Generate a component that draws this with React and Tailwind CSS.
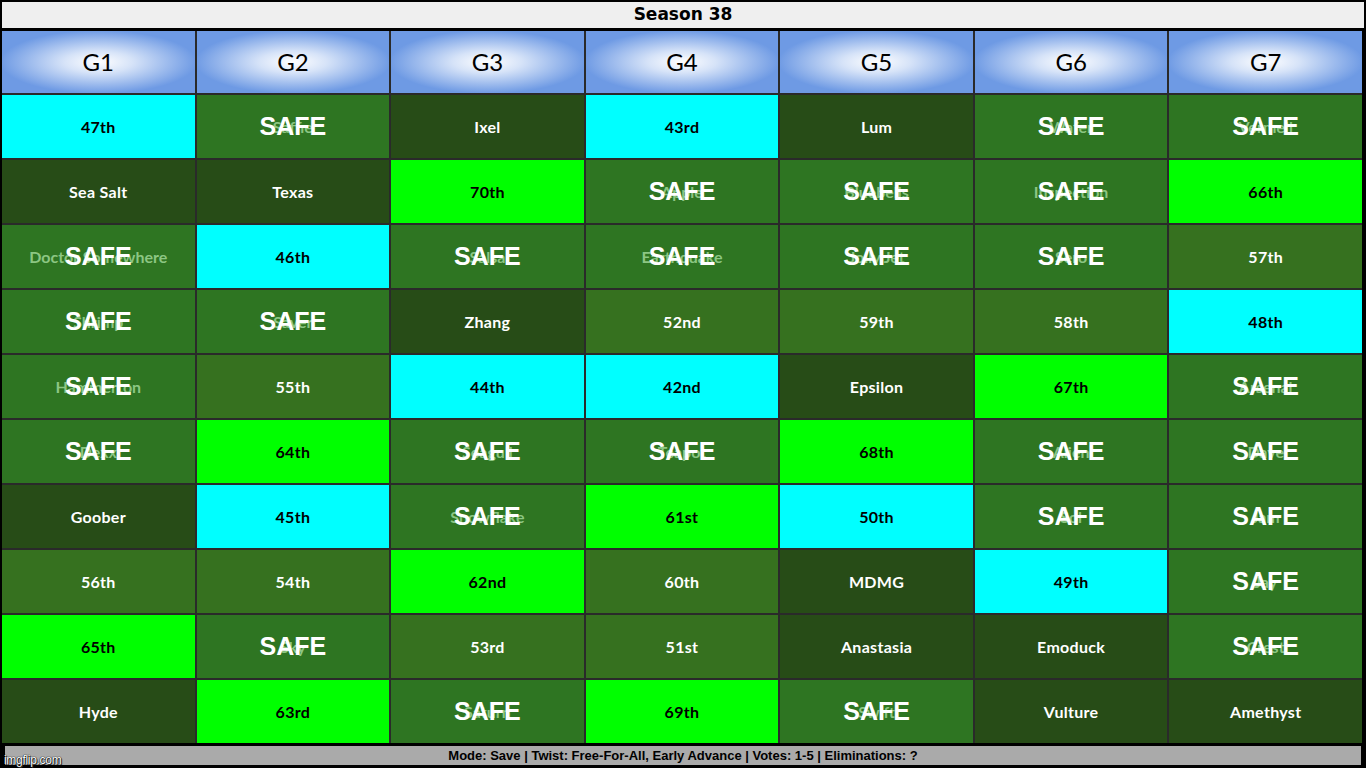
import React from 'react';

const C = 'bg-[#00ffff] text-black';
const B = 'bg-[#00ff00] text-black';
const D = 'bg-[#274c17] text-white';
const O = 'bg-[#36711f] text-white';

// [text, kind] — kind: c cyan, b bright, d dark, o olive, s safe
const rows = [
  [['47th', 'c'], ['Saffie', 's'], ['Ixel', 'd'], ['43rd', 'c'], ['Lum', 'd'], ['Wafer', 's'], ['Vermeil', 's']],
  [['Sea Salt', 'd'], ['Texas', 'd'], ['70th', 'b'], ['Apple', 's'], ['Bluebells', 's'], ['Inspection', 's'], ['66th', 'b']],
  [['Doctor Somewhere', 's'], ['46th', 'c'], ['Salsa', 's'], ['Earthquake', 's'], ['Jolly Jet', 's'], ['Sero', 's'], ['57th', 'o']],
  [['Shrimp', 's'], ['Saver', 's'], ['Zhang', 'd'], ['52nd', 'o'], ['59th', 'o'], ['58th', 'o'], ['48th', 'c']],
  [['Hammerton', 's'], ['55th', 'o'], ['44th', 'c'], ['42nd', 'c'], ['Epsilon', 'd'], ['67th', 'b'], ['Arsenal', 's']],
  [['Dexx', 's'], ['64th', 'b'], ['Seagull', 's'], ['Teapot', 's'], ['68th', 'b'], ['Alien', 's'], ['Dave', 's']],
  [['Goober', 'd'], ['45th', 'c'], ['Snowflake', 's'], ['61st', 'b'], ['50th', 'c'], ['Sol', 's'], ['Jam', 's']],
  [['56th', 'o'], ['54th', 'o'], ['62nd', 'b'], ['60th', 'o'], ['MDMG', 'd'], ['49th', 'c'], ['Jay', 's']],
  [['65th', 'b'], ['Sky', 's'], ['53rd', 'o'], ['51st', 'o'], ['Anastasia', 'd'], ['Emoduck', 'd'], ['Crest', 's']],
  [['Hyde', 'd'], ['63rd', 'b'], ['Saturn', 's'], ['69th', 'b'], ['Swift', 's'], ['Vulture', 'd'], ['Amethyst', 'd']],
];

const kindClass = { c: C, b: B, d: D, o: O };

function Cell({ text, kind }) {
  if (kind === 's') {
    return (
      <div className="relative flex items-center justify-center bg-[#2e7522]">
        <span className="font-['Lato',sans-serif] font-bold text-[16px] text-[#8cc683]">{text}</span>
        <span className="absolute inset-0 flex items-center justify-center font-['Liberation_Sans',Arial,sans-serif] font-bold text-[25px] text-white leading-none">
          SAFE
        </span>
      </div>
    );
  }
  return (
    <div className={`flex items-center justify-center ${kindClass[kind]}`}>
      <span className="font-['Lato',sans-serif] font-bold text-[16px] tracking-[0.3px]">{text}</span>
    </div>
  );
}

export default function App() {
  return (
    <div className="relative w-[1366px] h-[768px] bg-black flex flex-col overflow-hidden">
      <div className="mx-[2px] mt-[2px] h-[26px] bg-[#efefef] flex items-center justify-center">
        <span className="font-['DejaVu_Sans',sans-serif] font-bold text-[17px] text-black">Season 38</span>
      </div>

      <div className="ml-[2px] mr-[4px] mt-[3px] grid grid-cols-7 grid-rows-[62px_repeat(10,63px)] gap-[2px] bg-[#2a2a2a]">
        {['G1', 'G2', 'G3', 'G4', 'G5', 'G6', 'G7'].map((g) => (
          <div
            key={g}
            className="flex items-center justify-center bg-[radial-gradient(ellipse_at_center,#ffffff_0%,#d6e3f8_25%,#6e9ae4_72%)]"
          >
            <span className="font-['Lato',sans-serif] text-[24px] text-black">{g}</span>
          </div>
        ))}
        {rows.map((row, i) =>
          row.map(([text, kind], j) => <Cell key={`${i}-${j}`} text={text} kind={kind} />)
        )}
      </div>

      <div className="ml-[5px] mr-[5px] mt-[3px] h-[19px] bg-[#aaaaaa] flex items-center justify-center">
        <span className="font-['Liberation_Sans',Arial,sans-serif] font-bold text-[13px] text-black">
          Mode: Save | Twist: Free-For-All, Early Advance | Votes: 1-5 | Eliminations: ?
        </span>
      </div>

      <div className="absolute left-[4px] bottom-[2px] font-['Liberation_Sans',Arial,sans-serif] text-[12px] leading-none text-white tracking-[-0.3px] [text-shadow:0_0_1px_#000,0_0_1px_#000,1px_1px_0_#333]">
        imgflip.com
      </div>
    </div>
  );
}
